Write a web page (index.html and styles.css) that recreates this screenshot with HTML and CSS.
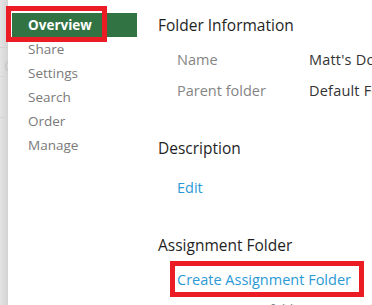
FILE: index.html
```html
<!DOCTYPE html>
<html lang="en">
<head>
    <meta charset="UTF-8">
    <meta name="viewport" content="width=device-width, initial-scale=1.0">
    <title>Folder Overview</title>
    <link rel="stylesheet" href="styles.css">
</head>
<body>
    <div id="page">
        <div class="backdrop"><span class="backdrop-letter">C</span></div>
        <div id="panel">
            <ul id="side-nav">
                <li class="nav-item active">Overview<span class="callout callout-nav"></span></li>
                <li class="nav-item">Share</li>
                <li class="nav-item">Settings</li>
                <li class="nav-item">Search</li>
                <li class="nav-item">Order</li>
                <li class="nav-item">Manage</li>
            </ul>
            <div id="content">
                <h2 class="section-title first">Folder Information</h2>
                <div class="info-row">
                    <span class="info-label">Name</span>
                    <span class="info-value">Matt's Documents</span>
                </div>
                <div class="info-row">
                    <span class="info-label">Parent folder</span>
                    <span class="info-value">Default Folder</span>
                </div>

                <h2 class="section-title description">Description</h2>
                <a class="action-link edit" href="#">Edit</a>

                <h2 class="section-title assignment">Assignment Folder</h2>
                <div class="create-wrap">
                    <a class="action-link create" href="#">Create Assignment Folder</a>
                    <span class="callout callout-create"></span>
                </div>
                <p class="help-text">An assignment folder is a special folder with extra options.</p>
            </div>
        </div>
    </div>
</body>
</html>
```

FILE: styles.css
```css
body {
    margin: 0;
    font-family: "Open Sans", "Noto Sans", sans-serif;
    background: #fff;
    overflow: hidden;
}
#page {
    display: flex;
    height: 305px;
}
.backdrop {
    width: 8px;
    flex-shrink: 0;
    position: relative;
    overflow: hidden;
    background:
        linear-gradient(to bottom, transparent 47px, #d2d2d2 47px, #d2d2d2 48px, transparent 48px,
                        transparent 76px, #d6d6d6 76px, #d6d6d6 77px, transparent 77px,
                        transparent 117px, #d6d6d6 117px, #d6d6d6 118px, transparent 118px),
        linear-gradient(to right, #e4e4e4, #d3d3d3);
}
.backdrop-letter {
    position: absolute;
    left: 4px;
    top: 56px;
    font-size: 14px;
    color: #c4c4c4;
}
#panel {
    flex: 1;
    display: flex;
    background: #fff;
}
#side-nav {
    list-style: none;
    margin: 0;
    padding: 13px 0 0 4px;
    width: 125px;
    flex-shrink: 0;
}
.nav-item {
    position: relative;
    height: 24px;
    line-height: 24px;
    padding-left: 16px;
    font-size: 13.5px;
    color: #7a7a7a;
}
.nav-item.active {
    background-color: #317342;
    color: #fff;
    font-weight: bold;
}
.callout {
    position: absolute;
    border: 5px solid #ec1c24;
    box-sizing: border-box;
}
.callout-nav {
    left: -6px;
    top: -7px;
    width: 101px;
    height: 36px;
}
#content {
    padding-left: 21px;
    flex: 1;
    overflow: hidden;
    white-space: nowrap;
}
.section-title {
    margin: 0;
    font-size: 15.5px;
    font-weight: normal;
    line-height: 24px;
    color: #1f1f1f;
}
.section-title.first {
    margin-top: 13px;
    margin-bottom: 7px;
}
.info-row {
    display: flex;
    height: 31px;
    line-height: 31px;
    padding-left: 19px;
    font-size: 14.5px;
}
.info-label {
    width: 132px;
    color: #858585;
}
.info-value {
    color: #333;
    letter-spacing: 0.2px;
}
.section-title.description {
    margin-top: 30px;
}
.action-link {
    display: inline-block;
    margin-left: 19px;
    line-height: 24px;
    font-size: 14.5px;
    color: #2a9ad5;
    text-decoration: none;
}
.edit {
    margin-top: 16px;
}
.section-title.assignment {
    margin-top: 33px;
}
.create-wrap {
    position: relative;
    margin-top: 11px;
}
.callout-create {
    left: 12px;
    top: -7px;
    width: 194px;
    height: 36px;
}
.help-text {
    margin: 8px 0 0 19px;
    font-size: 13px;
    color: #777;
}
```
